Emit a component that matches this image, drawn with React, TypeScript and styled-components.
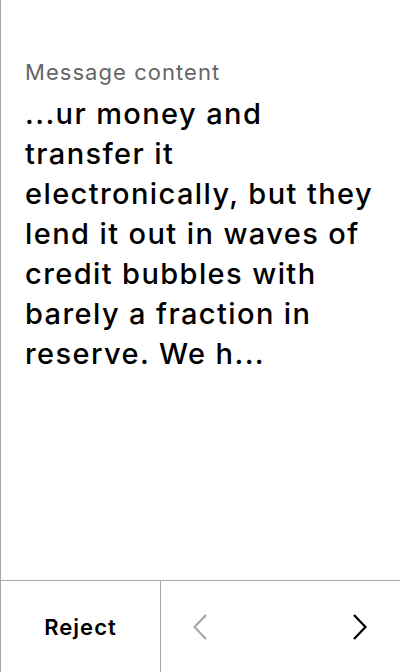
import React from "react";
import styled, { createGlobalStyle } from "styled-components";

const Global = createGlobalStyle`
  html, body { margin: 0; padding: 0; background: #fff; }
  body { font-family: Inter, "Noto Sans", sans-serif; }
`;

const Screen = styled.div`
  width: 400px;
  height: 672px;
  box-sizing: border-box;
  border-left: 1px solid #a8a8a8;
  display: flex;
  flex-direction: column;
  background: #fff;
`;

const Content = styled.div`
  flex: 1;
  padding: 58px 22px 0 24px;
  display: flex;
  flex-direction: column;
`;

const Label = styled.div`
  font-size: 22px;
  line-height: 28px;
  letter-spacing: 1.05px;
  color: #666;
`;

const Body = styled.div`
  margin-top: 8px;
  font-size: 29px;
  line-height: 40px;
  letter-spacing: 1.4px;
  font-weight: 500;
  color: #000;
`;

const Footer = styled.div`
  height: 91px;
  border-top: 1px solid #a8a8a8;
  display: grid;
  grid-template-columns: 160px 1fr;
`;

const RejectButton = styled.button`
  border: none;
  border-right: 1px solid #a8a8a8;
  background: transparent;
  font-family: inherit;
  font-size: 22px;
  font-weight: 600;
  letter-spacing: 1px;
  color: #000;
  padding: 0 0 0 0;
`;

const Nav = styled.div`
  display: flex;
  align-items: center;
  justify-content: space-between;
  padding: 0 33px 0 32px;
`;

const Chevron = styled.svg<{ $muted?: boolean }>`
  width: 14px;
  height: 26px;
  stroke: ${(p) => (p.$muted ? "#a8a8a8" : "#000")};
  stroke-width: 2.3;
  fill: none;
`;

export default function App() {
  return (
    <>
      <Global />
      <Screen>
        <Content>
          <Label>Message content</Label>
          <Body>
            ...ur money and transfer it electronically, but they lend it out in waves of credit bubbles with barely a fraction in reserve. We h...
          </Body>
        </Content>
        <Footer>
          <RejectButton>Reject</RejectButton>
          <Nav>
            <Chevron $muted viewBox="0 0 14 26">
              <polyline points="13,1 1.5,13 13,25" />
            </Chevron>
            <Chevron viewBox="0 0 14 26">
              <polyline points="1,1 12.5,13 1,25" />
            </Chevron>
          </Nav>
        </Footer>
      </Screen>
    </>
  );
}
